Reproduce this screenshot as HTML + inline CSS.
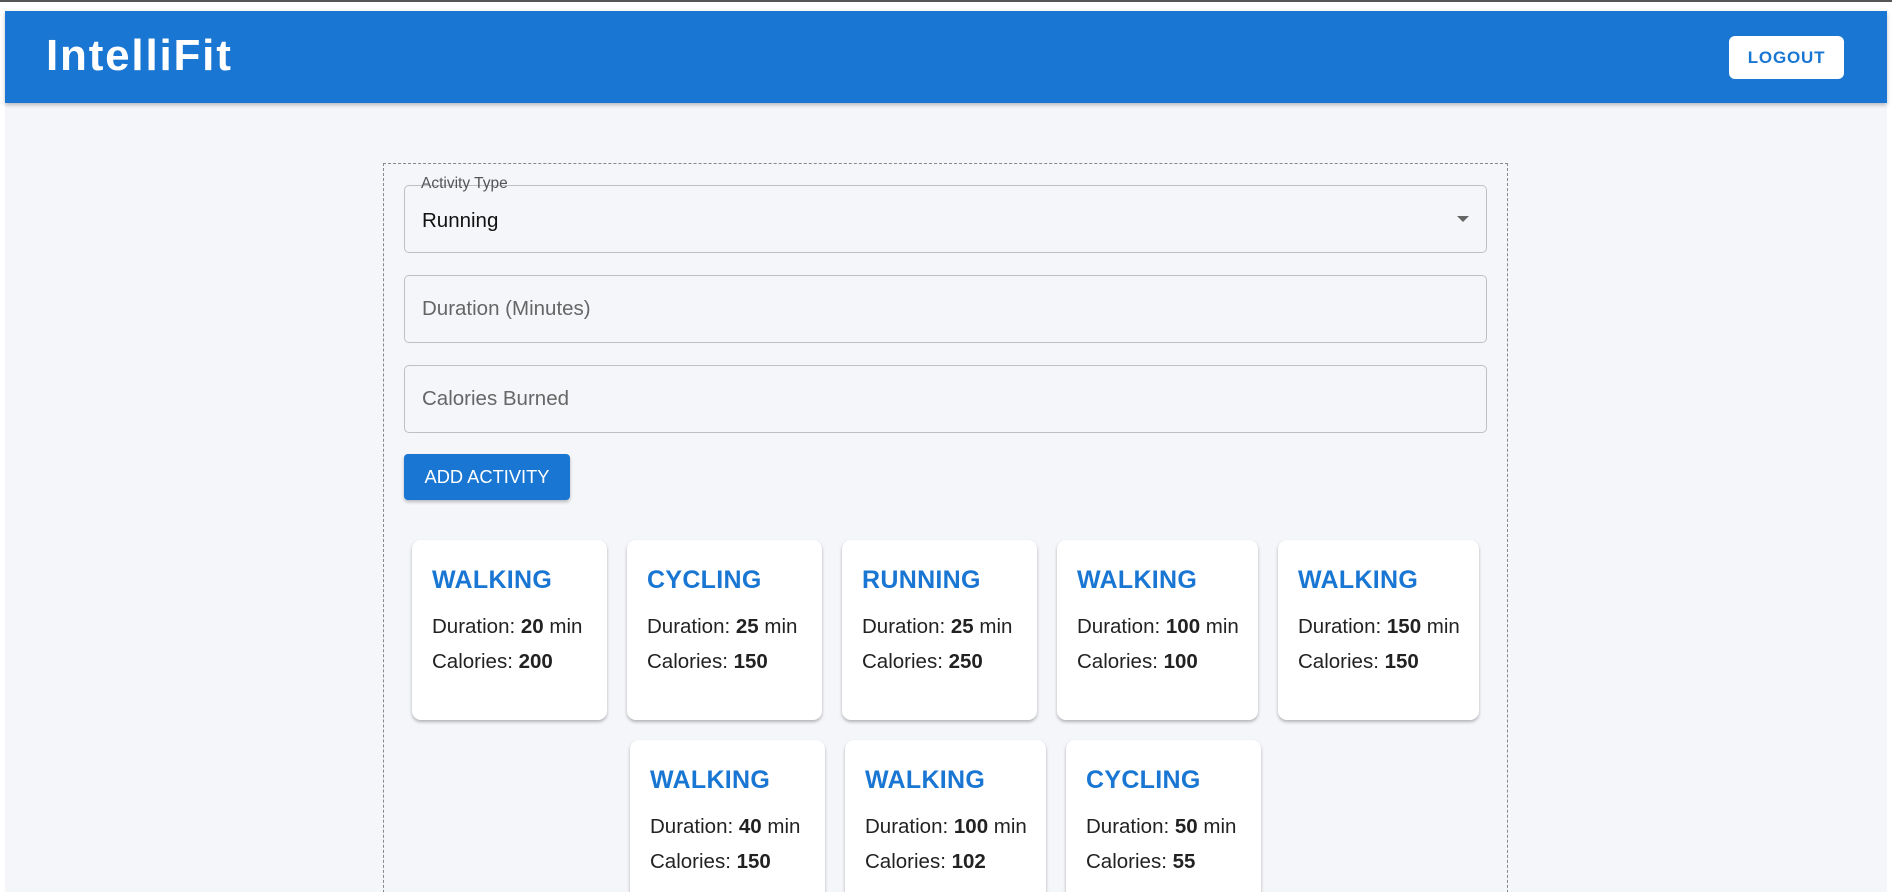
<!DOCTYPE html>
<html style="overflow:hidden"><head><style>
*{box-sizing:border-box;margin:0;padding:0}
html,body{width:1892px;height:892px;overflow:hidden}
body{background:#fff;font-family:"Liberation Sans",Arial,sans-serif;position:relative}
#wrap{position:absolute;left:0;top:0;width:1892px;height:892px;overflow:hidden}
.topline{position:absolute;left:0;top:0;width:1892px;height:2px;background:#555}
.bg{position:absolute;left:5px;top:11px;width:1882px;height:881px;background:#f5f6fa}
.hdr{position:absolute;left:5px;top:11px;width:1882px;height:92px;background:#1976d2;box-shadow:0 2px 4px rgba(0,0,0,.25)}
.title{position:absolute;left:46px;top:30px;color:#fff;font-weight:bold;font-size:44px;letter-spacing:1.8px;line-height:52px}
.logout{position:absolute;left:1729px;top:36px;width:115px;height:43px;background:#fff;border-radius:6px;color:#1976d2;font-weight:bold;font-size:17px;letter-spacing:.8px;text-align:center;line-height:43px}
.box{position:absolute;left:383px;top:163px;width:1125px;height:760px;border:1px dashed #888}
.field{position:absolute;left:404px;width:1083px;height:68px;border:1px solid #c0c0c4;border-radius:5px}
.ph{position:absolute;left:17px;top:0;line-height:66px;font-size:20.5px;color:#666}
.lbl{position:absolute;left:421px;top:176px;font-size:15.5px;color:#555;line-height:16px}
.arrow{position:absolute;left:1457px;top:216px;width:0;height:0;border-left:6px solid transparent;border-right:6px solid transparent;border-top:6px solid #666}
.btn{position:absolute;left:404px;top:454px;width:166px;height:46px;background:#1976d2;border-radius:4px;color:#fff;font-size:18.3px;text-align:center;line-height:46px;box-shadow:0 2px 3px rgba(0,0,0,.25)}
.card{position:absolute;background:#fff;border-radius:9px;box-shadow:0 2px 3px rgba(0,0,0,.28);padding-left:20px;height:180px}
.card h3{font-size:25px;font-weight:bold;color:#1976d2;margin-top:25px;line-height:30px;letter-spacing:.3px}
.card p{font-size:20.5px;color:#222;line-height:35px;white-space:nowrap}
.card p:first-of-type{margin-top:14px}
</style></head><body><div id="wrap">
<div class="topline"></div>
<div class="bg"></div>
<div class="hdr"></div>
<div class="title">IntelliFit</div>
<div class="logout">LOGOUT</div>
<div class="box"></div>
<div class="field" style="top:185px"><div class="ph" style="color:#111;top:2px">Running</div></div>
<div class="lbl">Activity Type</div>
<div class="arrow"></div>
<div class="field" style="top:275px"><div class="ph">Duration (Minutes)</div></div>
<div class="field" style="top:365px"><div class="ph">Calories Burned</div></div>
<div class="btn">ADD ACTIVITY</div>

<div class="card" style="left:412px;top:540px;width:195px"><h3>WALKING</h3><p>Duration: <b>20</b> min</p><p>Calories: <b>200</b></p></div>
<div class="card" style="left:627px;top:540px;width:195px"><h3>CYCLING</h3><p>Duration: <b>25</b> min</p><p>Calories: <b>150</b></p></div>
<div class="card" style="left:842px;top:540px;width:195px"><h3>RUNNING</h3><p>Duration: <b>25</b> min</p><p>Calories: <b>250</b></p></div>
<div class="card" style="left:1057px;top:540px;width:201px"><h3>WALKING</h3><p>Duration: <b>100</b> min</p><p>Calories: <b>100</b></p></div>
<div class="card" style="left:1278px;top:540px;width:201px"><h3>WALKING</h3><p>Duration: <b>150</b> min</p><p>Calories: <b>150</b></p></div>

<div class="card" style="left:630px;top:740px;width:195px"><h3>WALKING</h3><p>Duration: <b>40</b> min</p><p>Calories: <b>150</b></p></div>
<div class="card" style="left:845px;top:740px;width:201px"><h3>WALKING</h3><p>Duration: <b>100</b> min</p><p>Calories: <b>102</b></p></div>
<div class="card" style="left:1066px;top:740px;width:195px"><h3>CYCLING</h3><p>Duration: <b>50</b> min</p><p>Calories: <b>55</b></p></div>
</div></body></html>
